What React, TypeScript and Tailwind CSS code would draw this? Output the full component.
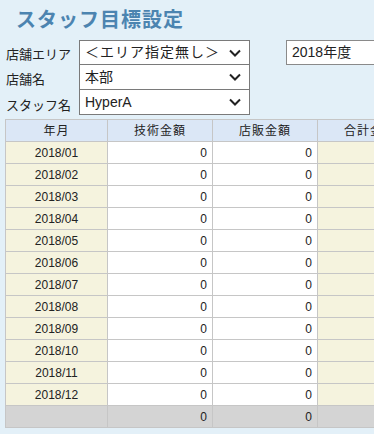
import React from "react";

const months = ["2018/01","2018/02","2018/03","2018/04","2018/05","2018/06","2018/07","2018/08","2018/09","2018/10","2018/11","2018/12"];

function Chevron() {
  return (
    <svg width="14" height="10" viewBox="0 0 14 10" className="shrink-0">
      <path d="M2 2.5 L7 7.5 L12 2.5" fill="none" stroke="#222" strokeWidth="2" />
    </svg>
  );
}

function Select({ text, cls, tcls = "" }: { text: string; cls: string; tcls?: string }) {
  return (
    <div className={`flex items-center justify-between bg-white border border-[#7a7a7a] pl-[5px] pr-[7px] text-[14px] text-[#222] ${cls}`}>
      <span className={`whitespace-nowrap ${tcls}`}>{text}</span>
      <Chevron />
    </div>
  );
}

export default function App() {
  const font = { fontFamily: '"Liberation Sans", "Noto Sans CJK JP", sans-serif' };
  const row = "grid grid-cols-[102px_105px_105px_105px] h-[22px] text-[12px] text-[#222]";
  return (
    <div className="w-[374px] h-[434px] overflow-hidden bg-[#e3f0f8]" style={font}>
      <div className="pl-[16px] pt-[7px] h-[40px] text-[20px] font-bold text-[#4c84b0] tracking-[1px] leading-[26px]">スタッフ目標設定</div>
      <div className="flex">
        <div className="w-[79px] shrink-0 pl-[6px] text-[13px] text-[#222]">
          <div className="h-[24px] pt-[5px]">店舗エリア</div>
          <div className="h-[25px] pt-[6px]">店舗名</div>
          <div className="h-[26px] pt-[7px]">スタッフ名</div>
        </div>
        <div className="w-[171px] shrink-0 flex flex-col">
          <Select text="＜エリア指定無し＞" cls="h-[25px]" tcls="tracking-[1px]" />
          <Select text="本部" cls="h-[26px] -mt-[1px]" />
          <Select text="HyperA" cls="h-[26px] -mt-[1px]" />
        </div>
        <div className="ml-[36px] w-[120px] shrink-0">
          <div className="h-[25px] bg-white border border-[#8a8a8a] pl-[5px] text-[14px] leading-[23px] text-[#222]">2018年度</div>
        </div>
      </div>
      <div className="ml-[5px] mt-[4px] w-[420px] border-l border-t border-[#c6c6c6]">
        <div className={`${row} bg-[#dbe7f6] text-[11px]`}>
          {["年月","技術金額","店販金額","合計金額"].map((h) => (
            <div key={h} className="flex items-center justify-center border-r border-b border-[#c6c6c6] tracking-[1px]">{h}</div>
          ))}
        </div>
        {months.map((m) => (
          <div key={m} className={row}>
            <div className="flex items-center justify-center bg-[#f5f3de] border-r border-b border-[#c6c6c6]">{m}</div>
            <div className="flex items-center justify-end pr-[5px] bg-white border-r border-b border-[#c6c6c6]">0</div>
            <div className="flex items-center justify-end pr-[5px] bg-white border-r border-b border-[#c6c6c6]">0</div>
            <div className="bg-[#f5f3de] border-r border-b border-[#c6c6c6]"></div>
          </div>
        ))}
        <div className={row}>
          <div className="bg-[#d4d4d4] border-r border-b border-[#c6c6c6]"></div>
          <div className="flex items-center justify-end pr-[5px] bg-[#d4d4d4] border-r border-b border-[#c6c6c6]">0</div>
          <div className="flex items-center justify-end pr-[5px] bg-[#d4d4d4] border-r border-b border-[#c6c6c6]">0</div>
          <div className="bg-[#d4d4d4] border-r border-b border-[#c6c6c6]"></div>
        </div>
      </div>
    </div>
  );
}
